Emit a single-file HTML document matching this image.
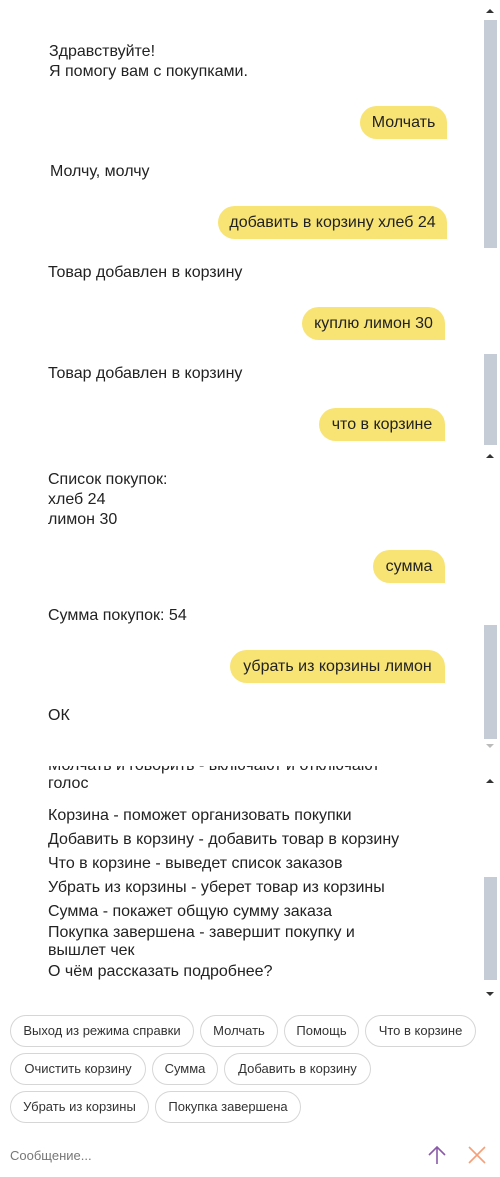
<!DOCTYPE html>
<html><head><meta charset="utf-8"><style>
body{margin:0;width:500px;height:1177px;background:#fff;position:relative;overflow:hidden;font-family:"Liberation Sans","DejaVu Sans",sans-serif;font-size:16px;color:#222}
.t{position:absolute;line-height:20px;white-space:nowrap}
.b{position:absolute;background:#f8e474;border-radius:17px 17px 0 17px;height:33px;line-height:33px;box-sizing:border-box;padding:0 10px;white-space:nowrap;color:#222;text-align:center}
.sb{position:absolute;left:484px;width:13px;background:#c5ccd6}
.ar{position:absolute;left:486px;width:0;height:0;border-left:4px solid transparent;border-right:4px solid transparent}
.up{border-bottom:4px solid #333}.dn{border-top:4px solid #333}
.c{position:absolute;height:32px;line-height:30px;border:1px solid #d6d6d6;border-radius:16px;box-sizing:border-box;text-align:center;font-size:13px;color:#333}
</style></head><body>
<div class="ar up" style="top:9px"></div>
<div class="sb" style="top:20px;height:228px"></div>
<div class="t" style="left:49px;top:42px">Здравствуйте!<br>Я помогу вам с покупками.</div>
<div class="b" style="left:360px;top:106px;width:87px">Молчать</div>
<div class="t" style="left:50px;top:162px">Молчу, молчу</div>
<div class="b" style="left:218px;top:206px;width:229px">добавить в корзину хлеб 24</div>
<div class="t" style="left:48px;top:263px">Товар добавлен в корзину</div>
<div class="b" style="left:302px;top:307px;width:143px">куплю лимон 30</div>
<div class="sb" style="top:354px;height:91px"></div>
<div class="t" style="left:48px;top:364px">Товар добавлен в корзину</div>
<div class="b" style="left:319px;top:408px;width:126px">что в корзине</div>
<div class="ar up" style="top:454px"></div>
<div class="t" style="left:48px;top:470px">Список покупок:<br>хлеб 24<br>лимон 30</div>
<div class="b" style="left:373px;top:550px;width:72px">сумма</div>
<div class="t" style="left:48px;top:606px">Сумма покупок: 54</div>
<div class="sb" style="top:625px;height:114px"></div>
<div class="b" style="left:230px;top:650px;width:215px">убрать из корзины лимон</div>
<div class="t" style="left:48px;top:706px">ОК</div>
<div class="ar" style="top:744px;border-top:4px solid #bbb"></div>
<div style="position:absolute;left:0;top:766px;width:480px;height:220px;overflow:hidden">
<div class="t" style="left:48px;top:-9px;line-height:18px">Молчать и говорить - включают и отключают<br>голос</div>
<div class="t" style="left:48px;top:38px;line-height:24px">Корзина - поможет организовать покупки<br>Добавить в корзину - добавить товар в корзину<br>Что в корзине - выведет список заказов<br>Убрать из корзины - уберет товар из корзины<br>Сумма - покажет общую сумму заказа</div>
<div class="t" style="left:48px;top:158px;line-height:18px">Покупка завершена - завершит покупку и<br>вышлет чек</div>
<div class="t" style="left:48px;top:196px">О чём рассказать подробнее?</div>
</div>
<div class="ar up" style="top:779px"></div>
<div class="sb" style="top:877px;height:103px"></div>
<div class="ar dn" style="top:992px"></div>
<div class="c" style="left:10px;top:1015px;width:184px">Выход из режима справки</div>
<div class="c" style="left:200px;top:1015px;width:78px">Молчать</div>
<div class="c" style="left:284px;top:1015px;width:75px">Помощь</div>
<div class="c" style="left:365px;top:1015px;width:111px">Что в корзине</div>
<div class="c" style="left:10px;top:1053px;width:136px">Очистить корзину</div>
<div class="c" style="left:152px;top:1053px;width:66px">Сумма</div>
<div class="c" style="left:224px;top:1053px;width:147px">Добавить в корзину</div>
<div class="c" style="left:10px;top:1091px;width:139px">Убрать из корзины</div>
<div class="c" style="left:155px;top:1091px;width:146px">Покупка завершена</div>
<div class="t" style="left:10px;top:1146px;font-size:13px;color:#777">Сообщение...</div>
<svg style="position:absolute;left:426px;top:1144px" width="22" height="22" viewBox="0 0 22 22"><path d="M11 20V3M3 11l8-8 8 8" stroke="#8a5aa8" stroke-width="1.6" fill="none"/></svg>
<svg style="position:absolute;left:467px;top:1145px" width="20" height="20" viewBox="0 0 20 20"><path d="M2 2l16 16M18 2L2 18" stroke="#f4a07a" stroke-width="1.6" fill="none"/></svg>
</body></html>
